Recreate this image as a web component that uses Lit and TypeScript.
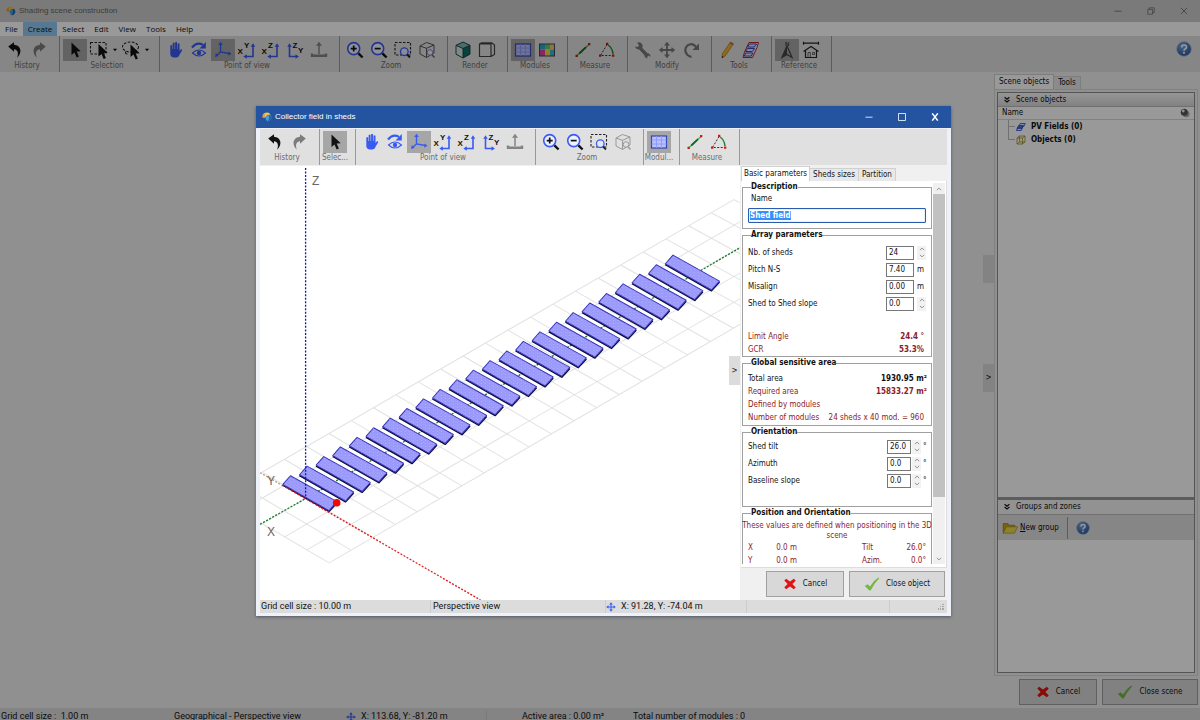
import { LitElement, html, svg, css, nothing } from "lit";
import { customElement, query } from "lit/decorators.js";
import { classMap } from "lit/directives/class-map.js";

const BLUE = "#3a5bf0";

const cursor = (x = 0, y = 0) =>
  svg`<path transform="translate(${x} ${y})" d="M6.5 2.5V15l3-2.6 2.2 5.1 2.2-1-2.2-4.9 4-.3z" fill="#111"/>`;

const lens = (inner: unknown) => svg`
  <circle cx="8.7" cy="8.6" r="6" fill="#eef1ff" stroke="${BLUE}" stroke-width="1.6"/>
  <path d="M13.4 13.3l4.2 4.2" stroke="#111" stroke-width="2.4"/>
  <g stroke="#111" stroke-width="1.7">${inner}</g>`;

const letter = (x: number, y: number, t: string) =>
  svg`<text class="glyph" x="${x}" y="${y}">${t}</text>`;

const icons: Record<string, unknown> = {
  undo: svg`<path d="M3.2 6.6L9 2.2v2.5c6.500 .4 9 7 3.200 13 1.700-5.200.400-8-3.200-8.400v2.500z" fill="#111"/>`,
  redo: svg`<path d="M16.800 6.600L11 2.200v2.500c-6.500 .4-9 7-3.200 13-1.700-5.200-.400-8 3.200-8.400v2.500z" fill="#7c7c7c"/>`,
  cursor: cursor(0, 0),
  rectSel: svg`<rect x="1.500" y="2.500" width="15.500" height="11.500" fill="none" stroke="#222" stroke-width="1.100" stroke-dasharray="2.500 1.500"/>${cursor(3, 1.500)}`,
  lasso: svg`<ellipse cx="9.500" cy="7" rx="8" ry="5" fill="none" stroke="#222" stroke-width="1.100" stroke-dasharray="2.500 1.500"/><path d="M4.500 11.500q-1 3 2 2.500" fill="none" stroke="#222"/>${cursor(3, 2)}`,
  hand: svg`<path d="M5.300 11.500V5.600q.9-1.200 1.800 0V9h.5V3.200q1-1.400 2 0V9h.5V2.400q1-1.400 2 0V9h.5V3.800q1-1.300 1.900 0v7.300l1.200-1.600q1.500-.6 1.500.7l-2.700 4.600q-.7 2.700-3.500 2.700H9q-3 0-3.700-3z" fill="${BLUE}"/>`,
  orbit: svg`<path d="M3 7.500q5-6 11-2.600" fill="none" stroke="${BLUE}" stroke-width="2.200"/><path d="M16.800 2v6.500h-6.300z" fill="${BLUE}"/><path d="M3.500 13q6.500-6 13 0-6.500 6-13 0z" fill="none" stroke="${BLUE}" stroke-width="1.100"/><circle cx="10" cy="13" r="2.200" fill="${BLUE}"/>`,
  axes: svg`<path d="M7.500 4v8l9 1.500M7.500 12l-4 3.500" fill="none" stroke="${BLUE}" stroke-width="1.400"/><path d="M7.500 1.800l2.300 3.200H5.200zM18.500 13.700l-3.400 2 .6-4.300zM2 17l.8-4 2.900 3z" fill="${BLUE}"/>`,
  xy: svg`${letter(0.500, 13.500, "X")}${letter(7, 7.800, "Y")}<path d="M16 6v10.500H8.500" fill="none" stroke="${BLUE}" stroke-width="1.600"/><path d="M16 3.200l2.300 3.500h-4.600zM6.300 16.500l3.500-2.300v4.600z" fill="${BLUE}"/>`,
  xz: svg`${letter(0.500, 13.500, "X")}${letter(7, 7.800, "Z")}<path d="M16 6v10.500H8.500" fill="none" stroke="${BLUE}" stroke-width="1.600"/><path d="M16 3.200l2.300 3.500h-4.600zM6.300 16.500l3.500-2.300v4.600z" fill="${BLUE}"/>`,
  zy: svg`${letter(7.500, 7.500, "Z")}${letter(13, 13, "Y")}<path d="M4.500 6v10.500H11" fill="none" stroke="${BLUE}" stroke-width="1.600"/><path d="M4.500 3.200l2.300 3.500H2.200zM14 16.500l-3.500-2.300v4.600z" fill="${BLUE}"/>`,
  ground: svg`<path d="M10 5v9" stroke="#848484" stroke-width="1.500"/><path d="M10 1.800l3 4H7zM1.800 13.500h2l.8 1h10.800l.8-1h2V17H1.800z" fill="#848484"/>`,
  zoomIn: lens(svg`<path d="M5.700 8.600h6M8.700 5.600v6"/>`),
  zoomOut: lens(svg`<path d="M5.700 8.600h6"/>`),
  zoomRect: svg`<rect x="2" y="2.500" width="15.500" height="12.500" fill="none" stroke="#222" stroke-width="1.100" stroke-dasharray="2.500 1.500"/><circle cx="11.300" cy="11.700" r="3.800" fill="#e4e8ff" stroke="${BLUE}" stroke-width="1.300"/><path d="M14 14.500l3 3" stroke="#222" stroke-width="1.800"/>`,
  zoomAll: svg`<path d="M3 6l6.500-3.500L17 5v8l-7.500 4.500L3 14zM3 6l6.500 2.300L17 5M9.500 8.300v9" fill="none" stroke="#555" stroke-width="1"/><circle cx="13" cy="12.500" r="2.800" fill="#eee" stroke="#7a80d8"/><path d="M15 14.700l2.500 2.800" stroke="#666" stroke-width="1.500"/>`,
  zoomAllOff: svg`<path d="M3 6l6.500-3.500L17 5v8l-7.500 4.500L3 14zM3 6l6.500 2.300L17 5M9.500 8.300v9" fill="none" stroke="#999" stroke-width="1"/><circle cx="13" cy="12.500" r="2.800" fill="#e0e0e0" stroke="#999"/><path d="M15 14.700l2.500 2.800" stroke="#999" stroke-width="1.300"/>`,
  cubeFull: svg`<path d="M10 2l7 3.300v8.900L10 18l-7-3.800V5.300z" fill="#0d6e66"/><path d="M3 5.300L10 8.500V18l-7-3.800z" fill="#cfe6e2"/><path d="M10 2l7 3.300-7 3.200-7-3.200z" fill="#7fb5ae"/><path d="M10 2l7 3.300v8.900L10 18l-7-3.800V5.300zM3 5.300l7 3.200 7-3.200M10 8.500V18" fill="none" stroke="#1b3b38" stroke-width=".9"/>`,
  cubeWire: svg`<path d="M2.500 4h11.500v12.500H2.500zM2.500 4l2-1.200h10.300L17.500 5v9.500L14 16.500M14 4l.8-1.200" fill="none" stroke="#444" stroke-width="1.200"/>`,
  module: svg`<rect x="2.500" y="4" width="15" height="12" fill="#b9c0ff" stroke="#2f46b8" stroke-width="1.200"/><path d="M7.500 4v12M12.500 4v12M2.500 8h15M2.500 12h15" stroke="#8d98f4" stroke-width=".9"/>`,
  moduleColor: svg`<rect x="2.500" y="4" width="15" height="12" fill="#fff"/><path d="M3 4h5v5.500H3z" fill="#28a8c8"/><path d="M8 4h5v5.500H8z" fill="#5cc87c"/><path d="M13 4h5v5.500h-5z" fill="#f0c850"/><path d="M3 9.500h5V16H3z" fill="#e040a0"/><path d="M8 9.500h5V16H8z" fill="#f0d840"/><path d="M13 9.500h5V16h-5z" fill="#38b8c8"/><rect x="2.500" y="4" width="15" height="12" fill="none" stroke="#446" stroke-width="1"/>`,
  line: svg`<path d="M3.500 16L16 4.500" stroke="#3b4" stroke-width="1.200"/><path d="M6.300 13.500L13 7.200" stroke="#186428" stroke-width="1.800"/><path d="M2.500 14.700h2.300V17H2.500zM15 3h2.300v2.300H15z" fill="#d01818"/>`,
  angle: svg`<path d="M10 4.500L3.500 15.500H16" fill="none" stroke="#333" stroke-dasharray="2 1.500"/><path d="M11 5q4.500 3 5 9" fill="none" stroke="#1a8a3a" stroke-width="1.500"/><path d="M9 2.800h2.300v2.300H9zM2 14.500h2.300v2.300H2zM15 14.500h2.300v2.300H15z" fill="#d01818"/>`,
  wrench: svg`<path d="M4.300 2.500q3-.8 4.800 1.600 1 1.800.2 3.900l5.200 5.200q3 .2 3 3.800l-2-1.500-1.500 1.500 1 1.300q-3.500 0-3.700-3.200L6.200 9.400Q3 9.500 2 6.500L4.700 7l1.300-1.300z" fill="#777"/>`,
  move: svg`<path d="M10 4v12M4 10h12" stroke="#777" stroke-width="1.800"/><path d="M10 1.800l3 3.700H7zM10 18.200l3-3.700H7zM1.800 10l3.700-3v6zM18.200 10l-3.700-3v6z" fill="#777"/>`,
  rotate: svg`<path d="M15.500 7.500q-4-5.500-9-2-4.500 4.300 0 9.500 2 1.700 4 1.800" fill="none" stroke="#777" stroke-width="2.200"/><path d="M18 3.500V10h-6.500z" fill="#777"/>`,
  pencil: svg`<path d="M13.500 2l3 1.800-8.200 12L5 18l.2-4z" fill="#f0b030" stroke="#a87010" stroke-width=".7"/><path d="M13.500 2l3 1.800-1 1.500-3-1.800z" fill="#cc6a50"/><path d="M5 18l.2-1.900 1.500.8z" fill="#222"/>`,
  sheds: svg`<path d="M8 2.500h9.500L16 7.500 11.500 17.500H2L3.500 12z" fill="#f4dede" stroke="#c02828" stroke-width="1"/><path d="M8.500 4h7l-2.300 3H6.500zM6.500 8.500h7l-2.300 3H4.500zM4.800 13h7l-1.500 3H3.200z" fill="#dfe4ff" stroke="#3348c8" stroke-width="1"/>`,
  north: svg`<path d="M10 6L15 17.500 10 14.500 5 17.500z" fill="none" stroke="#444" stroke-width="1.300"/><path d="M10 6V14.500L5 17.500z" fill="#444"/><text class="glyph n" x="8" y="5.500">N</text>`,
  house: svg`<path d="M2.500 3.200h15M2.500 1.700v3M17.500 1.700v3" stroke="#222" stroke-width="1.200"/><path d="M2.500 11.500l7.500-5 7.500 5M4.500 10.500v7h11v-7" fill="none" stroke="#222" stroke-width="1.200"/><path d="M7 17.500v-5h2.300v5M11.500 12.500h2v2h-2z" fill="none" stroke="#333" stroke-width=".7"/>`,
  help: svg`<defs><radialGradient id="hg" cx=".4" cy=".3" r=".8"><stop offset="0" stop-color="#7fa9e0"/><stop offset="1" stop-color="#1f4f96"/></radialGradient></defs><circle cx="10" cy="10" r="9" fill="url(#hg)" stroke="#8fa8cc" stroke-width="1"/><path d="M7 8q0-3 3.100-3t3 2.700Q13 9.200 11 10.200q-1 .6-1 2" fill="none" stroke="#fff" stroke-width="2"/><circle cx="10" cy="14.800" r="1.300" fill="#fff"/>`,
  logo: svg`<path d="M1.500 11Q0 3 7 1.500q8-2 10 4.500-7-2.500-10 5z" fill="#f6c437"/><path d="M1.500 11Q0 4 6 2q-2 5 1 9z" fill="#e89a30"/><path d="M7 11q3-7.500 10-5 2.500 3 1.500 7-2 5.500-7.500 5.500-4-2-4-7.500z" fill="#4c9ed6"/><path d="M13 6q5-.5 5.500 5-1 7-7.500 7.500 5-4 2-12.500z" fill="#2463a8"/>`,
  cross: svg`<path d="M4.500 2.500L10 6.600l5.500-4.100 2.700 2.700L13.400 10l4.800 5-2.800 2.600L10 13.500l-5.500 4-2.700-2.700L6.600 10 1.800 5z" fill="#e01414"/>`,
  check: svg`<path d="M1 12.500l3.500-2.200 3 2.700Q11.500 6 18 2l1 .8Q12.500 9.500 8.300 18H6.800z" fill="#74b843"/>`,
  folder: svg`<path d="M1.500 16.500v-12h6l1.500 2h7v3" fill="#c8a41c" stroke="#8c7410" stroke-width=".8"/><path d="M1.500 16.500L5.500 8.500h14l-4 8z" fill="#ecd848" stroke="#9a8420" stroke-width=".8"/>`,
  fields: svg`<path d="M8.500 3h10l-3 6h-10zM5 7h10l-3 6H2zM3.500 11h9.500L10.500 17H.800z" fill="#e4e9ff" stroke="#2c50d0" stroke-width="1.700"/>`,
  box: svg`<path d="M2 6h11v12H2zM7 2h11v12H7zM2 6l5-4M13 6l5-4M13 18l5-4M2 18l5-4" fill="none" stroke="#a08c20" stroke-width="1.600"/>`,
  pan: svg`<path d="M10 4v12M4 10h12" stroke="${BLUE}" stroke-width="2.200"/><path d="M10 .5l3.500 4.500h-7zM10 19.500l3.500-4.500h-7zM.5 10L5 6.500v7zM19.500 10L15 6.500v7z" fill="${BLUE}"/>`,
  sphere: svg`<circle cx="12.500" cy="12" r="6.500" fill="#aaa"/><circle cx="8.500" cy="8.500" r="7" fill="#555"/><circle cx="6.500" cy="6" r="2.800" fill="#eee"/>`,
  chevrons: svg`<path d="M4 3l6 5 6-5M4 10l6 5 6-5" fill="none" stroke="#111" stroke-width="2.800"/>`,
  min: svg`<path d="M1 10.500h18" stroke="currentColor" stroke-width="2"/>`,
  max: svg`<rect x="1.500" y="1.500" width="17" height="17" fill="none" stroke="currentColor" stroke-width="2"/>`,
  restore: svg`<path d="M2 6h12V18H2zM6 6V2h12v12h-4" fill="none" stroke="currentColor" stroke-width="1.800"/>`,
  close: svg`<path d="M2 2l16 16M18 2L2 18" stroke="currentColor" stroke-width="2"/>`,
  closeBold: svg`<path d="M3 1l14 18M17 1l-14 18" stroke="currentColor" stroke-width="3.800"/>`,
  up: svg`<path d="M3 14l7-7 7 7" fill="none" stroke="#777" stroke-width="2.600"/>`,
  down: svg`<path d="M3 6l7 7 7-7" fill="none" stroke="#777" stroke-width="2.600"/>`,
  drop: svg`<path d="M3 6h14l-7 8z" fill="#111"/>`,
};

const icon = (name: string, size = "") =>
  html`<svg class="ico ${size}" viewBox="0 0 20 20" aria-hidden="true">${icons[name]}</svg>`;

interface Tool { icon: string; label: string; on?: boolean; menu?: boolean }
interface Group { title: string; tools: Tool[] }
const t = (icon: string, label: string, extra: Partial<Tool> = {}): Tool => ({ icon, label, ...extra });

const history: Group = { title: "History", tools: [t("undo", "Undo"), t("redo", "Redo")] };
const view: Group = {
  title: "Point of view",
  tools: [t("hand", "Pan"), t("orbit", "Orbit"), t("axes", "Perspective", { on: true }), t("xy", "Top view"),
    t("xz", "Front view"), t("zy", "Side view"), t("ground", "Ground")],
};
const zoom = (last: string): Group => ({
  title: "Zoom",
  tools: [t("zoomIn", "Zoom in"), t("zoomOut", "Zoom out"), t("zoomRect", "Zoom window"), t(last, "Zoom all")],
});
const measure: Group = { title: "Measure", tools: [t("line", "Distance"), t("angle", "Angle")] };

const mainTools: Group[] = [
  history,
  { title: "Selection", tools: [t("cursor", "Pick", { on: true }), t("rectSel", "Rectangle", { menu: true }), t("lasso", "Lasso", { menu: true })] },
  view,
  zoom("zoomAll"),
  { title: "Render", tools: [t("cubeFull", "Realistic"), t("cubeWire", "Technical")] },
  { title: "Modules", tools: [t("module", "Show modules", { on: true }), t("moduleColor", "Colour strings")] },
  measure,
  { title: "Modify", tools: [t("wrench", "Edit object"), t("move", "Move"), t("rotate", "Rotate")] },
  { title: "Tools", tools: [t("pencil", "Draw"), t("sheds", "Partition")] },
  { title: "Reference", tools: [t("north", "North", { on: true }), t("house", "Dimensions")] },
];
const dialogTools: Group[] = [
  history,
  { title: "Selec...", tools: [t("cursor", "Pick", { on: true })] },
  view,
  zoom("zoomAllOff"),
  { title: "Modul...", tools: [t("module", "Show modules", { on: true })] },
  measure,
];

type Pt = [number, number];
const SHEDS = 24;
const CELLS_LONG = 23;
const CELLS_WIDE = 5;

/* Grid node k along the field and j across it, in the scene's own units. */
const node = (k: number, j: number): Pt => {
  const bx = 69 + 21.9 * k + 0.028 * k * k;
  const by = 396 - 0.5806 * (bx - 69);
  const tx = -42 + 22.1 * k + 0.0125 * k * k;
  const ty = 34 + 0.5777 * (472 - tx);
  const f = j / CELLS_WIDE;
  return [bx + (tx - bx) * f, by + (ty - by) * f];
};
const seg = (a: Pt, b: Pt) => `M${a[0].toFixed(1)} ${a[1].toFixed(1)}L${b[0].toFixed(1)} ${b[1].toFixed(1)}`;

const gridPath = () => {
  let d = "";
  for (let k = 0; k <= CELLS_LONG; k++) d += seg(node(k, 0), node(k, CELLS_WIDE));
  for (let j = 0; j <= CELLS_WIDE; j++) d += seg(node(0, j), node(CELLS_LONG, j));
  return d;
};

const shed = (i: number) => {
  const x = 22.8 + 16.59 * i;
  const y = 317.6 - 9.57 * i;
  const p = (dx: number, dy: number) => `${(x + dx).toFixed(1)},${(y + dy).toFixed(1)}`;
  return svg`
    <polyline class="shade" points="${p(0, 0.8)} ${p(46, 27)} ${p(54, 18.3)}"/>
    <polygon class="shed" points="${p(0, 0)} ${p(7.6, -8.6)} ${p(54, 17.3)} ${p(46, 26.2)}"/>
    <polygon class="speckle" points="${p(0, 0)} ${p(7.6, -8.6)} ${p(54, 17.3)} ${p(46, 26.2)}"/>`;
};

@customElement("app-root")
export class AppRoot extends LitElement {
  @query("#name") nameBox!: HTMLInputElement;

  firstUpdated() {
    this.nameBox.focus();
    this.nameBox.select();
  }

  static styles = css`
    :host {
      display: block;
      position: relative;
      height: 100vh;
      overflow: hidden;
      font: 8px/12px "DejaVu Sans Condensed", "DejaVu Sans", sans-serif;
      color: #111;
      background: #f0f0f0;
    }
    * { box-sizing: border-box; }
    button, input { font: inherit; color: inherit; margin: 0; padding: 0; }
    button { border: 0; background: none; display: flex; align-items: center; justify-content: center; }
    .ico { width: 20px; height: 20px; flex: none; display: block; }
    .ico.s4 { width: 6px; height: 6px; }
    .ico.s8 { width: 8px; height: 8px; }
    .ico.s10 { width: 10px; height: 10px; }
    .ico.s14 { width: 14px; height: 14px; }
    .ico.s16 { width: 16px; height: 16px; }
    .glyph { font: bold 8px "Liberation Sans", sans-serif; fill: #111; }
    .glyph.n { font-size: 6px; fill: #444; }

    .app { display: flex; flex-direction: column; height: 100%; }
    .title { display: flex; align-items: center; height: 22px; padding-left: 6px; font-family: "Liberation Sans", sans-serif; }
    .title .name { flex: 1; padding-left: 3px; }
    .title .win { width: 33px; height: 22px; }
    .title.main { background: #ccc; color: #666; }
    .menu { display: flex; height: 14px; background: #fff; font: 8px/14px "Open Sans", sans-serif; }
    .menu button { padding: 0 5px; }
    .menu button.on { background: #8fc8f4; }

    .tools { display: flex; height: 36px; background: #e0e0e0; }
    .group { display: flex; flex-direction: column; align-items: center; padding: 3px 8px 0 3px; border-right: 1px solid #999; }
    .group .set { display: flex; }
    .group .set button { width: 24px; height: 22px; }
    .group .set button.on { background: #a6a6a6; }
    .group .set button.drop { width: 8px; }
    .group .cap { width: 0; display: flex; justify-content: center; white-space: nowrap; line-height: 10px; color: #6c6c6c; }
    .tools .end { margin-left: auto; padding: 0 8px; height: 26px; }

    .body { flex: 1; display: flex; justify-content: flex-end; min-height: 0; }
    .grips { display: flex; flex-direction: column; align-items: stretch; width: 11px; padding-top: 183px; gap: 81px; }
    .grips button { height: 28px; background: #dadada; }
    .side { width: 206px; padding: 2px 2px 3px 0; display: flex; flex-direction: column; }
    .tabs { display: flex; align-items: flex-end; height: 15px; }
    .tabs button { height: 13px; padding: 0 3px; border: 1px solid #d0d0d0; border-left-width: 0; border-bottom: 0; background: #e8e8e8; white-space: nowrap; }
    .tabs button.on { height: 15px; padding: 0 2px; background: #fff; border-left-width: 1px; }
    .side .tabs button { padding: 0 4px; }
    .page { flex: 1; min-height: 0; border: 1px solid #d8d8d8; padding: 2px; margin-bottom: 3px; }
    .frame { display: flex; flex-direction: column; height: 100%; border: 1px solid #8c8c8c; background: #fff; }
    .frame h2 { display: flex; align-items: center; gap: 5px; height: 14px; margin: 0; padding: 0 5px; font: inherit; background: linear-gradient(#fafafa, #d8d8d8); border-bottom: 1px solid #bbb; }
    .frame h2.plain { background: #f4f4f4; height: 15px; }
    .col { display: flex; align-items: center; height: 13px; padding: 0 4px; border-bottom: 1px solid #d8d8d8; }
    .col span { flex: 1; }
    .tree { list-style: none; margin: 0; padding: 0 0 0 10px; font-weight: bold; flex: 1; }
    .tree li { display: flex; align-items: center; gap: 5px; height: 13px; }
    .tree li::before { content: ""; width: 6px; height: 13px; border-left: 1px solid #bbb; background: linear-gradient(#bbb, #bbb) 0 6px / 6px 1px no-repeat; margin-right: -4px; }
    .tree li:last-child::before { height: 7px; align-self: flex-start; }
    .bottom { height: 175px; border-top: 3px solid #999; display: flex; flex-direction: column; }
    .bar { display: flex; align-items: center; height: 25px; padding: 0 4px; background: #e0e0e0; }
    .bar button { gap: 2px; height: 22px; padding-right: 8px; border-right: 1px solid #999; margin-right: 8px; }
    .bar button + button { border: 0; }
    .acts { display: flex; justify-content: flex-end; gap: 5px; }
    .acts button { height: 26px; width: 78px; gap: 6px; background: #d8d8d8; border: 1px solid #a0a0a0; }
    .acts button.wide { width: 96px; }

    .status { display: flex; align-items: center; height: 13px; background: #dcdcdc; font: 9px/13px Roboto, sans-serif; white-space: nowrap; }
    .status > span { display: flex; align-items: center; gap: 5px; height: 13px; }
    .status.foot { height: 12px; padding-top: 2px; align-items: flex-start; flex: none; }
    .status .m1 { width: 174px; padding-left: 1px; }
    .status .m2 { width: 172px; }
    .status .m3 { width: 141px; border-right: 1px solid #ccc; }
    .status .m4 { width: 146px; padding-left: 35px; }
    .status .d1 { width: 171px; padding-left: 1px; border-right: 1px solid #ccc; }
    .status .d2 { width: 175px; padding-left: 2px; border-right: 1px solid #ccc; }
    .status .d3 { width: 141px; border-right: 1px solid #ccc; }
    .status .d4 { width: 143px; border-right: 1px solid #ccc; }
    .status .grip { margin-left: auto; width: 10px; }

    .veil { position: absolute; inset: 0; display: flex; padding: 106px 249px 104px 256px; background: rgba(0, 0, 0, 0.4); }
    .dialog { flex: 1; min-width: 0; display: flex; flex-direction: column; background: #2454a0; box-shadow: 0 1px 3px rgba(40, 50, 70, 0.6); }
    .dialog .title { color: #fff; }
    .inner { flex: 1; min-height: 0; display: flex; flex-direction: column; border: solid #eef2f8; border-width: 1px 4px 3px; background: #f0f0f0; }
    .dialog .group { padding-top: 2px; }
    .work { flex: 1; min-height: 0; display: flex; padding-top: 1px; }
    .scene { flex: 1; min-width: 0; position: relative; background: #fff; overflow: hidden; }
    .scene svg.view { display: block; width: 100%; height: 100%; }
    .scene .fold { position: absolute; right: 0; top: 190px; width: 11px; height: 29px; background: #dcdcdc; }
    .grid { fill: none; stroke: #e2e2e2; stroke-width: 1; }
    .axis { fill: none; stroke-width: 1.3; stroke-dasharray: 2 1.5; }
    .shade { fill: none; stroke: #0a0a30; stroke-width: 1.6; stroke-linejoin: round; }
    .shed { fill: #9a98fa; stroke: #3432b8; stroke-width: 1; stroke-linejoin: round; }
    .speckle { fill: url(#dots); }
    .mark { font: 12px "Liberation Sans", sans-serif; fill: #666; }

    .params { width: 207px; display: flex; flex-direction: column; padding-left: 1px; }
    .sheet { flex: 1; min-height: 0; display: flex; background: #fff; border-bottom: 1px solid #ddd; border-right: 1px solid #ddd; padding-bottom: 3px; }
    .form { flex: 1; min-width: 0; overflow: hidden; padding-left: 1px; }
    .track { width: 12px; margin: 2px 1px 0 1px; display: flex; flex-direction: column; background: #f0f0f0; }
    .track button { height: 11px; }
    .thumb { height: 303px; background: #c1c1c1; margin-bottom: auto; }
    fieldset { margin: 0; padding: 0; border: 1px solid #a0a0a0; min-width: 0; }
    legend { padding: 0; margin-left: 8px; line-height: 12px; font-weight: bold; color: #111; }
    .who { display: block; padding-left: 8px; }
    .who input { display: block; width: 178px; height: 15px; margin: 3px 0 5px -3px; padding: 0 1px; border: 1px solid #2a5cb0; box-shadow: inset 0 0 1px #2a5cb0; border-radius: 1px; font-weight: bold; outline: none; background: #fff; }
    .who input::selection { background: #3390ff; color: #fff; }
    .array { padding: 3px 0 0; }
    .area { padding: 3px 0 1px; }
    .orient { padding: 0 0 17px; }
    .row { display: flex; align-items: center; height: 17px; padding-left: 5px; }
    .row label { flex: 1; }
    .row input { width: 28px; height: 14px; padding: 0 2px; border: 1px solid #777; background: #fff; }
    .row .unit { width: 17px; padding-left: 3px; display: flex; align-items: center; }
    .orient .row input { width: 24px; }
    .orient .row .unit { width: 20px; padding-left: 1px; gap: 2px; }
    .spin { width: 9px; display: flex; flex-direction: column; background: #f2f2f2; }
    .spin button { height: 7px; }
    .out { display: flex; justify-content: space-between; height: 13px; line-height: 13px; padding: 0 4px 0 5px; }
    .out.in { padding-right: 7px; }
    .red { color: #8c1c28; }
    .first { margin-top: 18px; }
    .note { margin: 2px -2px 0; line-height: 10px; text-align: center; white-space: nowrap; }
    .pos { display: grid; grid-template-columns: 20px 29px 1fr 36px; padding: 0 5px; line-height: 13px; }
    .pos .r { text-align: right; }
    .pos .mid { padding-left: 65px; }
    .dialog .acts { padding: 3px 2px; }
  `;

  private toolbar(groups: Group[], end: unknown = nothing) {
    return html`<div class="tools" role="toolbar">
      ${groups.map((g) => html`<div class="group">
        <div class="set">${g.tools.map((x) => html`
          <button class=${classMap({ on: !!x.on })} aria-label=${x.label}>${icon(x.icon)}</button>
          ${x.menu ? html`<button class="drop" aria-label="${x.label} options">${icon("drop", "s4")}</button>` : nothing}`)}
        </div>
        <span class="cap">${g.title}</span>
      </div>`)}
      ${end}
    </div>`;
  }

  private spin(what: string) {
    return html`<span class="spin">
      <button aria-label="Increase ${what}">${icon("up", "s4")}</button>
      <button aria-label="Decrease ${what}">${icon("down", "s4")}</button>
    </span>`;
  }

  private field(id: string, label: string, value: string, unit: string, spin: boolean) {
    return html`<div class="row">
      <label for=${id}>${label}</label>
      <input id=${id} .value=${value} />
      <span class="unit">${spin ? this.spin(label) : nothing}${unit}</span>
    </div>`;
  }

  private scene() {
    return html`<div class="scene">
      <svg class="view" viewBox="0 0 480 433" preserveAspectRatio="xMinYMin slice" role="img" aria-label="Perspective view of the sheds">
        <defs><pattern id="dots" width="4" height="3" patternUnits="userSpaceOnUse">
          <circle cx="1" cy="1" r=".4" fill="#d0d0ff"/><circle cx="3" cy="2.4" r=".4" fill="#bcbcff"/>
        </pattern></defs>
        <path class="grid" d=${gridPath()} />
        <path class="axis" stroke="#1c7a2c" d="M0 357.5L45 332 480 81" />
        ${Array.from({ length: SHEDS }, (_, i) => shed(SHEDS - 1 - i))}
        <path class="axis" stroke="#c8a080" d="M0 306L22 318.5" />
        <path class="axis" stroke="#e02020" d="M22 318.5L220 433" />
        <path class="axis" stroke="#1414c0" d="M45.5 2V332" />
        <circle cx="76.5" cy="336" r="3.8" fill="#f00808" />
        <text class="mark" x="52" y="19">Z</text>
        <text class="mark" x="7" y="318">Y</text>
        <text class="mark" x="7" y="369">X</text>
      </svg>
      <button class="fold" aria-label="Fold panel">&gt;</button>
    </div>`;
  }

  private form() {
    return html`<div class="form">
      <fieldset>
        <legend>Description</legend>
        <div class="who"><label for="name">Name</label><input id="name" .value=${"Shed field"} /></div>
      </fieldset>
      <fieldset class="array">
        <legend>Array parameters</legend>
        ${this.field("nb", "Nb. of sheds", "24", "", true)}
        ${this.field("pitch", "Pitch N-S", "7.40", "m", false)}
        ${this.field("mis", "Misalign", "0.00", "m", false)}
        ${this.field("slope", "Shed to Shed slope", "0.0", "", true)}
        <div class="out in red first"><span>Limit Angle</span><b>24.4 °</b></div>
        <div class="out in red"><span>GCR</span><b>53.3%</b></div>
      </fieldset>
      <fieldset class="area">
        <legend>Global sensitive area</legend>
        <div class="out"><span>Total area</span><b>1930.95 m²</b></div>
        <div class="out red"><span>Required area</span><b>15833.27 m²</b></div>
        <div class="out red"><span>Defined by modules</span></div>
        <div class="out in red"><span>Number of modules</span><span>24 sheds x 40 mod. = 960</span></div>
      </fieldset>
      <fieldset class="orient">
        <legend>Orientation</legend>
        ${this.field("tilt", "Shed tilt", "26.0", "°", true)}
        ${this.field("azi", "Azimuth", "0.0", "°", true)}
        ${this.field("base", "Baseline slope", "0.0", "°", true)}
      </fieldset>
      <fieldset class="red">
        <legend>Position and Orientation</legend>
        <p class="note">These values are defined when positioning in the 3D<br />scene</p>
        <div class="pos">
          <span>X</span><span class="r">0.0 m</span><span class="mid">Tilt</span><span class="r">26.0°</span>
          <span>Y</span><span class="r">0.0 m</span><span class="mid">Azim.</span><span class="r">0.0°</span>
        </div>
      </fieldset>
    </div>`;
  }

  render() {
    return html`
      <div class="app">
        <header class="title main">
          ${icon("logo", "s10")}<span class="name">Shading scene construction</span>
          <button class="win" aria-label="Minimize">${icon("min", "s8")}</button>
          <button class="win" aria-label="Restore">${icon("restore", "s8")}</button>
          <button class="win" aria-label="Close">${icon("close", "s8")}</button>
        </header>
        <nav class="menu">
          ${["File", "Create", "Select", "Edit", "View", "Tools", "Help"].map(
            (m) => html`<button class=${classMap({ on: m === "Create" })}>${m}</button>`)}
        </nav>
        ${this.toolbar(mainTools, html`<button class="end" aria-label="Help">${icon("help", "s16")}</button>`)}
        <main class="body">
          <div class="grips"><button aria-label="Resize"></button><button aria-label="Fold panel">&gt;</button></div>
          <aside class="side">
            <div class="tabs"><button class="on">Scene objects</button><button>Tools</button></div>
            <div class="page">
              <div class="frame">
                <h2>${icon("chevrons", "s8")}Scene objects</h2>
                <div class="col"><span>Name</span>${icon("sphere", "s10")}</div>
                <ul class="tree">
                  <li>${icon("fields", "s10")}PV Fields (0)</li>
                  <li>${icon("box", "s10")}Objects (0)</li>
                </ul>
                <section class="bottom">
                  <h2 class="plain">${icon("chevrons", "s8")}Groups and zones</h2>
                  <div class="bar"><button>${icon("folder", "s16")}<span><u>N</u>ew group</span></button><button aria-label="Help">${icon("help", "s14")}</button></div>
                </section>
              </div>
            </div>
            <div class="acts">
              <button>${icon("cross", "s14")}Cancel</button>
              <button class="wide">${icon("check", "s16")}Close scene</button>
            </div>
          </aside>
        </main>
        <footer class="status foot">
          <span class="m1">Grid cell size :&nbsp; 1.00 m</span>
          <span class="m2">Geographical - Perspective view</span>
          <span class="m3">${icon("pan", "s10")}X: 113.68, Y: -81.20 m</span>
          <span class="m4">Active area : 0.00 m²</span>
          <span>Total number of modules : 0</span>
        </footer>
      </div>
      <div class="veil">
        <section class="dialog" role="dialog" aria-label="Collector field in sheds">
          <header class="title">
            ${icon("logo", "s10")}<span class="name">Collector field in sheds</span>
            <button class="win" aria-label="Minimize">${icon("min", "s8")}</button>
            <button class="win" aria-label="Maximize">${icon("max", "s8")}</button>
            <button class="win" aria-label="Close">${icon("closeBold", "s8")}</button>
          </header>
          <div class="inner">
            ${this.toolbar(dialogTools)}
            <div class="work">
              ${this.scene()}
              <div class="params">
                <div class="tabs"><button class="on">Basic parameters</button><button>Sheds sizes</button><button>Partition</button></div>
                <div class="sheet">
                  ${this.form()}
                  <div class="track">
                    <button aria-label="Scroll up">${icon("up", "s4")}</button>
                    <div class="thumb"></div>
                    <button aria-label="Scroll down">${icon("down", "s4")}</button>
                  </div>
                </div>
                <div class="acts">
                  <button>${icon("cross", "s14")}Cancel</button>
                  <button class="wide">${icon("check", "s16")}Close object</button>
                </div>
              </div>
            </div>
            <footer class="status">
              <span class="d1">Grid cell size : 10.00 m</span>
              <span class="d2">Perspective view</span>
              <span class="d3">${icon("pan", "s10")}X: 91.28, Y: -74.04 m</span>
              <span class="d4"></span>
              <span class="grip"><svg class="ico s8" viewBox="0 0 8 8" aria-hidden="true"><path d="M5 1h2v1H5zM3 3h1v1H3zM5 3h2v1H5zM1 5h1v2H1zM3 5h1v2H3zM5 5h2v2H5z" fill="#a8a8a8"/></svg></span>
            </footer>
          </div>
        </section>
      </div>`;
  }
}
